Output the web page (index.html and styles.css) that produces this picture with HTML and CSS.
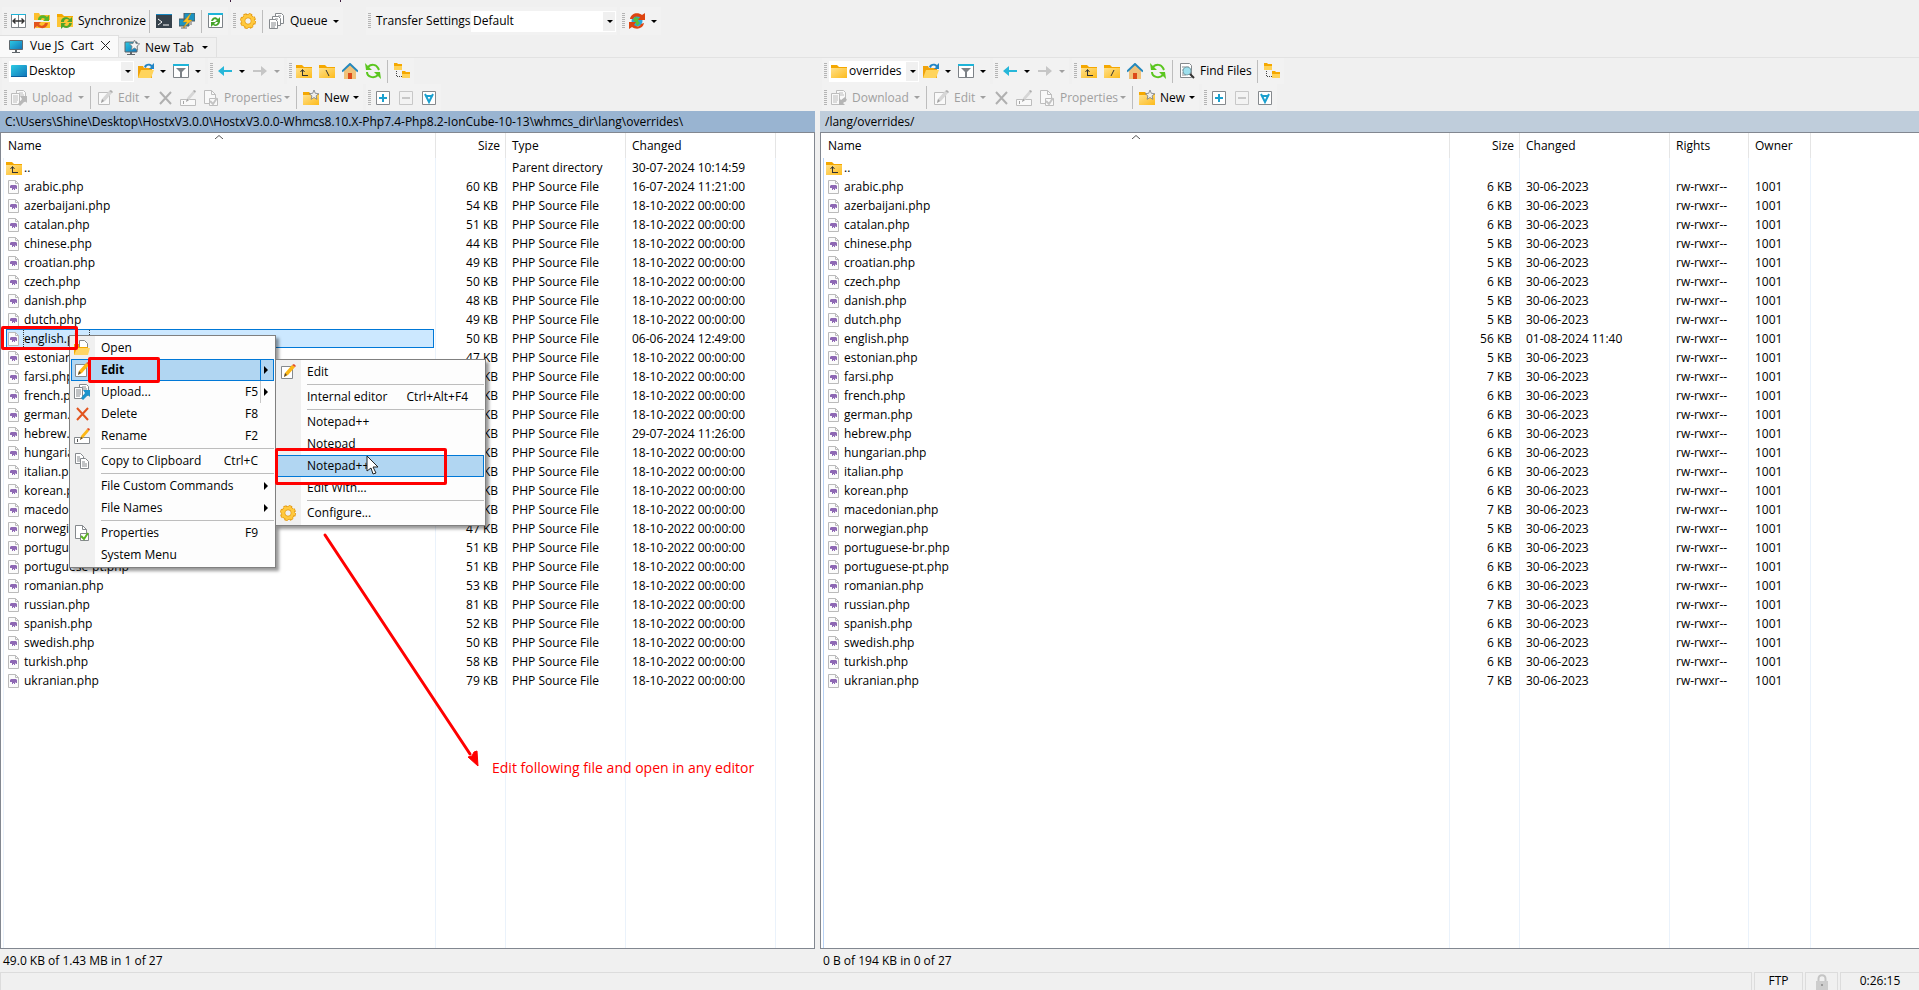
FILE: index.html
```
<!DOCTYPE html>
<html lang="en">

<head>
  <meta charset="UTF-8">
  <meta name="viewport" content="width=device-width, initial-scale=1.0">
  <title>Vue JS Cart - WinSCP</title>
  <link rel="stylesheet" href="styles.css">
</head>

<body>
  <!-- icon sprite -->
  <svg class="sprite" aria-hidden="true">
    <defs>
      <linearGradient id="gold" x1="0" y1="0" x2="1" y2="1"><stop offset="0" stop-color="#ffe08a"/><stop offset="1" stop-color="#fdbb1c"/></linearGradient>
      <linearGradient id="blue" x1="0" y1="0" x2="1" y2="1"><stop offset="0" stop-color="#2ccbe4"/><stop offset="1" stop-color="#1173b8"/></linearGradient>
    </defs>
    <symbol id="i-compare" viewBox="0 0 16 16"><path d="M.5 1.500h14v13H.5z" fill="#fff" stroke="#7d8287"/><path d="M0 1h15v1H0z" fill="#1eb4d8"/><path d="M7.500 2v12" stroke="#7d8287"/><path d="M2 8h11M4.500 5.500L2 8l2.500 2.500M10.500 5.500L13 8l-2.500 2.500" fill="none" stroke="#333" stroke-width="1.400"/></symbol>
    <symbol id="i-folder" viewBox="0 0 16 16"><path d="M0 2h6l2 2h8v3H0z" fill="#f5a800"/><path d="M0 5h16v10H0z" fill="url(#gold)"/></symbol>
    <symbol id="i-browse" viewBox="0 0 16 16"><path d="M0 0h5l1 2h10v5H0zM2 9h14v6H2z" fill="#fdbf2d"/><path d="M4 7c0-5 6-6 9-3l2-2v6H9l2-2C9 4 7 5 7 7z" fill="#59b52c"/><path d="M0 9h7l-2 2c2 3 5 2 6-1h3c-1 5-6 7-11 3l-3 3z" fill="#e2541e"/></symbol>
    <symbol id="i-sync" viewBox="0 0 16 16"><path d="M0 1h5l2 2h9v3H0z" fill="#f5a800"/><path d="M0 4h16v10H0z" fill="#fdc536"/><path d="M4 9c0-5 6-6 9-3l2-2v5h-5l2-2c-2-2-5-1-5 2zM15 10c-1 5-6 6-9 4l-2 2v-6h5l-2 2c2 2 5 1 5-2z" fill="#4da52b"/></symbol>
    <symbol id="i-terminal" viewBox="0 0 16 16"><path d="M0 1h16v14H0z" fill="#36424c"/><path d="M0 1h16v1H0z" fill="#1787c0"/><path d="M2 6l4 3-4 3M7 12h6" fill="none" stroke="#fff"/></symbol>
    <symbol id="i-putty" viewBox="0 0 16 16"><path d="M5 0h11v8H5zM0 6h10v7H0z" fill="#1b93c2" stroke="#555b60"/><path d="M2 15h6M12 9v3M5 13v2" stroke="#666"/><path d="M12 0L4 9h4l-4 6 9-8H9z" fill="#ffc21f" stroke="#d38c00" stroke-width=".4"/></symbol>
    <symbol id="i-keep" viewBox="0 0 16 16"><path d="M.5 1.500h14v13H.5z" fill="#fff" stroke="#7d8287"/><path d="M0 0h15v2H0z" fill="#1eb4d8"/><path d="M3 8c1-4 5-5 7-2l2-2v5H7l2-2c-2-1-3-1-4 1zM12 9c-1 4-5 5-7 3l-2 2V9h5l-2 2c2 1 3 0 4-2z" fill="#46a42a"/></symbol>
    <symbol id="i-gear" viewBox="0 0 16 16"><circle cx="8" cy="8" r="6.500" fill="none" stroke="#e59a12" stroke-width="3" stroke-dasharray="3.100 2"/><circle cx="8" cy="8" r="4.800" fill="none" stroke="#e59a12" stroke-width="4.200"/><circle cx="8" cy="8" r="6.300" fill="none" stroke="#ffc93e" stroke-width="1.800" stroke-dasharray="2.200 2.750"/><circle cx="8" cy="8" r="4.800" fill="none" stroke="#ffc93e" stroke-width="2.800"/></symbol>
    <symbol id="i-queue" viewBox="0 0 16 16"><g fill="#fff" stroke="#85898d"><path d="M6.500.5h6l2 2v8h-8z"/><path d="M3.500 3.500h6l2 2v7h-8z"/><path d="M.5 6.500h6l2 2v7h-8z"/></g><path d="M2 10h5M2 12h5M2 14h4M6 6h3M9 3h3" stroke="#85898d" fill="none"/></symbol>
    <symbol id="i-globe" viewBox="0 0 16 16"><circle cx="8" cy="8" r="5.500" fill="#29a8dd"/><path d="M6 4l4 1-1 3 2 2-3 3-2-4-2-2z" fill="#5ac13b"/><path d="M1 6c1-6 8-7 12-4l3-2v7H9l2-3C8 3 5 3 4 6zM15 10c-1 6-8 7-12 4l-3 2V9h7l-2 3c3 2 6 2 7-1z" fill="#dd4410"/></symbol>
    <symbol id="i-monitor" viewBox="0 0 16 16"><path d="M1.500 2.500h13v9h-13z" fill="url(#blue)" stroke="#61676c"/><path d="M7 12h2v2H7zM4 14h8v1H4z" fill="#61676c"/></symbol>
    <symbol id="i-newtab" viewBox="0 0 16 16"><path d="M1 2h12v10H1z" fill="url(#blue)" stroke="#61676c"/><path d="M6 12h2v2H6zM3 14h8v1H3z" fill="#61676c"/><path d="M10.500 0l1.500 3.500 3.700.3-2.800 2.500.8 3.700-3.200-2-3.200 2 .8-3.700L5.300 3.800 9 3.500z" fill="#f4f4f4" stroke="#777c82" stroke-width=".8"/></symbol>
    <symbol id="i-desktop" viewBox="0 0 16 16"><rect y="2" width="16" height="12" rx="1" fill="url(#blue)"/><path d="M0 13h16v1H0z" fill="#0a5e9e"/></symbol>
    <symbol id="i-open" viewBox="0 0 16 16"><path d="M0 3h5l1 2h8v10H0z" fill="#f0a30a"/><path d="M3 7h13l-3 8H0z" fill="#ffd45c"/><path d="M6 4c1-4 6-4 8-2l2-2v6h-5l2-2c-2-2-4-2-5 1z" fill="#2285c5"/></symbol>
    <symbol id="i-filter" viewBox="0 0 16 16"><path d="M.5 1.500h15v13H.5z" fill="#fff" stroke="#7d8287"/><path d="M0 1h16v2H0z" fill="#1eb4d8"/><path d="M3 5h10l-4 4v5H7V9z" fill="#7d8287"/></symbol>
    <symbol id="i-back" viewBox="0 0 16 16"><path d="M1 8l6-5v4h8v2H7v4z" fill="#27b7d9"/></symbol>
    <symbol id="i-fwd" viewBox="0 0 16 16"><path d="M15 8L9 3v4H1v2h8v4z" fill="#999"/></symbol>
    <symbol id="i-up" viewBox="0 0 16 16"><use href="#i-folder"/><path d="M6.500 13V7M4.500 9l2-2.500 2 2.500M6 12.500h6" fill="none" stroke="#333"/></symbol>
    <symbol id="i-root" viewBox="0 0 16 16"><use href="#i-folder"/><path d="M7 7l3 6" stroke="#333"/></symbol>
    <symbol id="i-rootr" viewBox="0 0 16 16"><use href="#i-folder"/><path d="M10 7l-3 6" stroke="#333"/></symbol>
    <symbol id="i-home" viewBox="0 0 16 16"><path d="M2 7l6-6 6 6v9H2z" fill="#f0c27a"/><path d="M6 10h4v6H6z" fill="#dd4a1a"/><path d="M0 8.500L8 1l8 7.500" fill="none" stroke="#2588bd" stroke-width="2"/></symbol>
    <symbol id="i-refresh" viewBox="0 0 16 16"><path d="M3 4c3-3 8-3 10 1l1 2M2 9c0 5 7 7 11 3" fill="none" stroke="#5bc61f" stroke-width="2"/><path d="M0 0l1 7h6zM16 16l-1-7H9z" fill="#5bc61f"/></symbol>
    <symbol id="i-tree" viewBox="0 0 16 16"><path d="M0 0h3l1 1h4v6H0zM8 8h3l1 1h4v6H8z" fill="#f5a800"/><path d="M0 3h8v4H0zM8 11h8v4H8z" fill="#ffd257"/><path d="M2.500 8v5M3 13.500h5" stroke="#444" stroke-dasharray="1 1"/></symbol>
    <symbol id="i-transfer" viewBox="0 0 16 16"><g fill="#fff" stroke="#85898d"><path d="M5.500.5h7l2 2v9h-9z"/><path d="M.5 3.500h8v11h-8z"/></g><path d="M2 6h5M2 8h5M2 10h5M2 12h4M8 3h4M9 5h4" stroke="#85898d"/><path d="M9 6h7v7l-2-2-5 5-2-2 4-5z" fill="#1d94cc"/></symbol>
    <symbol id="i-download" viewBox="0 0 16 16"><g fill="#fff" stroke="#85898d"><path d="M5.500.5h7l2 2v9h-9z"/><path d="M.5 3.500h8v11h-8z"/></g><path d="M2 6h5M2 8h5M2 10h5M2 12h4M8 3h4M9 5h4" stroke="#85898d"/><path d="M8 15V8l2 2 4-3 2 3-4 3 2 2z" fill="#777"/></symbol>
    <symbol id="i-edit" viewBox="0 0 16 16"><path d="M1.500 2.500h11v12h-11z" fill="#fff" stroke="#85898d"/><path d="M4 13l1-4 7-8 3 2-7 8z" fill="#fcb714"/><path d="M4 13l1-4 2 2z" fill="#59493a"/><path d="M12 1l2-1 2 2-1 1z" fill="#e34b22"/></symbol>
    <symbol id="i-delete" viewBox="0 0 16 16"><path d="M3 2l11 12M14 2L3 14" stroke="#e2541e" stroke-width="2"/></symbol>
    <symbol id="i-rename" viewBox="0 0 16 16"><path d="M.5 9.500h15v6H.5z" fill="#fff" stroke="#85898d"/><path d="M3.500 11v3" stroke="#555"/><path d="M6 12l1-4 6-7 2 2-6 7z" fill="#fcb714"/><path d="M6 12l1-3 2 1z" fill="#59493a"/><path d="M13 1l1-1 2 1-1 2z" fill="#e34b22"/></symbol>
    <symbol id="i-props" viewBox="0 0 16 16"><path d="M1.500.500h7l4 4v9h-11z" fill="#fff" stroke="#85898d"/><path d="M8.500.5v4h4" fill="none" stroke="#85898d"/><path d="M6.500 8.500h8v7h-8z" fill="#fff" stroke="#85898d"/><path d="M7 11l3 3 4-6" fill="none" stroke="#5bb324" stroke-width="2"/></symbol>
    <symbol id="i-new" viewBox="0 0 16 16"><use href="#i-folder"/><path d="M11 0l1.300 3.300 3.400.4-2.600 2.200.8 3.400L11 7.500 8.100 9.300l.8-3.400-2.600-2.200 3.400-.4z" fill="#eee" stroke="#777c82" stroke-width=".8"/></symbol>
    <symbol id="i-plus" viewBox="0 0 16 16"><path d="M1.500 1.500h13v13h-13z" fill="#fff" stroke="#85898d"/><path d="M4 8h8M8 4v8" stroke="#1aa0cf" stroke-width="2"/></symbol>
    <symbol id="i-minus" viewBox="0 0 16 16"><path d="M1.500 1.500h13v13h-13z" fill="#f3f3f3" stroke="#c8c8c8"/><path d="M4 8h8" stroke="#c8c8c8" stroke-width="2"/></symbol>
    <symbol id="i-select" viewBox="0 0 16 16"><path d="M1.500 1.500h13v13h-13z" fill="#fff" stroke="#85898d"/><path d="M4 4l4 8 4-8M5 6h6" fill="none" stroke="#1aa0cf" stroke-width="2"/></symbol>
    <symbol id="i-find" viewBox="0 0 16 16"><path d="M1.500.5h9l2 2v12h-11z" fill="#fff" stroke="#85898d"/><path d="M3 4h7M3 7h3M3 10h2M3 12h4" stroke="#85898d"/><circle cx="8" cy="8" r="4" fill="#9de0ee" stroke="#7aa5ae"/><path d="M11 11l4 4" stroke="#333" stroke-width="2"/></symbol>
    <symbol id="i-openfile" viewBox="0 0 16 16"><path d="M5.500.5h5l3 3v7h-8z" fill="#fff" stroke="#85898d"/><path d="M0 4h5v3h9v8H0z" fill="#f5a800"/><path d="M3 8h13l-2 7H0z" fill="#ffd566"/></symbol>
    <symbol id="i-copy" viewBox="0 0 16 16"><g fill="#fff" stroke="#85898d"><path d="M1.500.5h5l3 3v7h-8z"/><path d="M6.500 5.500h5l3 3v7h-8z"/></g><path d="M3 4h3M3 6h3M3 8h3M8 9h3M8 11h5M8 13h5" stroke="#85898d"/></symbol>
    <symbol id="i-php" viewBox="0 0 12 14"><path d="M.5.500h7l3 3v10H.5z" fill="#fbfbfb" stroke="#bbb"/><path d="M7.500.5v3h3" fill="none" stroke="#bbb"/><path d="M3 5h5l1 1v3H8L7 8v2H6V9H5v1H4V8H2V6z" fill="#8e68b4"/></symbol>
    <symbol id="i-lock" viewBox="0 0 16 16"><path d="M4.500 9V5c0-5 7-5 7 0v4" fill="none" stroke="#c4c4c4" stroke-width="2"/><path d="M2 7h12v9H2z" fill="#cdcdcd"/><circle cx="8" cy="11" r="1" fill="#888"/></symbol>
    <symbol id="i-sort" viewBox="0 0 8 4"><path d="M0 4l4-3.500L8 4" fill="none" stroke="#555"/></symbol>
  </svg>

  <div class="app">
    <div class="menu-edge"><i></i><i></i></div>

    <div class="bar bar-top">
      <div class="group">
        <button class="tool" aria-label="Compare directories"><svg><use href="#i-compare"/></svg></button>
        <button class="tool" aria-label="Synchronize browsing"><svg><use href="#i-browse"/></svg></button>
        <button class="tool w-sync"><svg><use href="#i-sync"/></svg>Synchronize</button>
        <span class="sep"></span>
        <button class="tool" aria-label="Terminal"><svg><use href="#i-terminal"/></svg></button>
        <button class="tool" aria-label="PuTTY"><svg><use href="#i-putty"/></svg></button>
        <span class="sep"></span>
        <button class="tool" aria-label="Keep up to date"><svg><use href="#i-keep"/></svg></button>
      </div>
      <div class="group">
        <button class="tool" aria-label="Preferences"><svg><use href="#i-gear"/></svg></button>
        <span class="sep"></span>
        <button class="tool w-queue"><svg><use href="#i-queue"/></svg>Queue</button>
        <button class="caret" aria-label="Queue options"></button>
      </div>
      <div class="group group-transfer">
        <label class="tool-label" for="transfer">Transfer Settings</label>
        <div class="combo combo-transfer"><select id="transfer"><option>Default</option></select></div>
      </div>
      <div class="group">
        <button class="tool" aria-label="Reconnect"><svg><use href="#i-globe"/></svg></button>
        <button class="caret" aria-label="Reconnect options"></button>
      </div>
    </div>

    <div class="tabs">
      <button class="tab active"><svg><use href="#i-monitor"/></svg><span>Vue JS&nbsp; Cart</span><b class="close"></b></button>
      <button class="tab"><svg><use href="#i-newtab"/></svg><span>New Tab</span><b class="arrow"></b></button>
    </div>

    <main class="panes">
      <section class="pane local">
        <div class="bar">
          <div class="group">
            <div class="combo combo-local"><svg><use href="#i-desktop"/></svg><select aria-label="Local drive"><option>Desktop</option></select></div>
            <button class="tool" aria-label="Open directory"><svg><use href="#i-open"/></svg></button>
            <button class="caret" aria-label="Recent"></button>
            <button class="tool" aria-label="Filter"><svg><use href="#i-filter"/></svg></button>
            <button class="caret" aria-label="Filter options"></button>
          </div>
          <div class="group">
            <button class="tool" aria-label="Back"><svg><use href="#i-back"/></svg></button>
            <button class="caret" aria-label="Back history"></button>
            <button class="tool" aria-label="Forward" disabled><svg><use href="#i-fwd"/></svg></button>
            <button class="caret" aria-label="Forward history" disabled></button>
          </div>
          <div class="group">
            <button class="tool" aria-label="Parent directory"><svg><use href="#i-up"/></svg></button>
            <button class="tool" aria-label="Root directory"><svg><use href="#i-root"/></svg></button>
            <button class="tool" aria-label="Home directory"><svg><use href="#i-home"/></svg></button>
            <button class="tool" aria-label="Refresh"><svg><use href="#i-refresh"/></svg></button>
            <span class="sep"></span>
            <button class="tool" aria-label="Tree"><svg><use href="#i-tree"/></svg></button>
          </div>
        </div>
        <div class="bar">
          <div class="group">
            <button class="tool w-upload" disabled><svg><use href="#i-transfer"/></svg>Upload</button>
            <button class="caret" aria-label="Upload options" disabled></button>
            <span class="sep"></span>
            <button class="tool w-edit" disabled><svg><use href="#i-edit"/></svg>Edit</button>
            <button class="caret" aria-label="Edit options" disabled></button>
            <button class="tool" aria-label="Delete" disabled><svg><use href="#i-delete"/></svg></button>
            <button class="tool" aria-label="Rename" disabled><svg><use href="#i-rename"/></svg></button>
            <button class="tool w-props" disabled><svg><use href="#i-props"/></svg>Properties</button>
            <button class="caret" aria-label="Properties options" disabled></button>
            <span class="sep"></span>
            <button class="tool w-new"><svg><use href="#i-new"/></svg>New</button>
            <button class="caret" aria-label="New options"></button>
          </div>
          <div class="group">
            <button class="tool" aria-label="Select files"><svg><use href="#i-plus"/></svg></button>
            <button class="tool" aria-label="Unselect files"><svg><use href="#i-minus"/></svg></button>
            <button class="tool" aria-label="Select all"><svg><use href="#i-select"/></svg></button>
          </div>
        </div>
        <div class="path">C:\Users\Shine\Desktop\HostxV3.0.0\HostxV3.0.0-Whmcs8.10.X-Php7.4-Php8.2-IonCube-10-13\whmcs_dir\lang\overrides\</div>
        <div class="list">
          <table>
            <colgroup><col class="c-name"><col class="c-size"><col class="c-type"><col class="c-changed"><col></colgroup>
            <thead>
              <tr><th>Name<svg class="sort"><use href="#i-sort"/></svg></th><th class="num">Size</th><th>Type</th><th>Changed</th><th></th></tr>
            </thead>
            <tbody id="local-files"></tbody>
          </table>
        </div>
        <div class="summary">49.0 KB of 1.43 MB in 1 of 27</div>
      </section>

      <section class="pane remote">
        <div class="bar">
          <div class="group">
            <div class="combo combo-remote"><svg><use href="#i-folder"/></svg><select aria-label="Remote directory"><option>overrides</option></select></div>
            <button class="tool" aria-label="Open directory"><svg><use href="#i-open"/></svg></button>
            <button class="caret" aria-label="Recent"></button>
            <button class="tool" aria-label="Filter"><svg><use href="#i-filter"/></svg></button>
            <button class="caret" aria-label="Filter options"></button>
          </div>
          <div class="group">
            <button class="tool" aria-label="Back"><svg><use href="#i-back"/></svg></button>
            <button class="caret" aria-label="Back history"></button>
            <button class="tool" aria-label="Forward" disabled><svg><use href="#i-fwd"/></svg></button>
            <button class="caret" aria-label="Forward history" disabled></button>
          </div>
          <div class="group">
            <button class="tool" aria-label="Parent directory"><svg><use href="#i-up"/></svg></button>
            <button class="tool" aria-label="Root directory"><svg><use href="#i-rootr"/></svg></button>
            <button class="tool" aria-label="Home directory"><svg><use href="#i-home"/></svg></button>
            <button class="tool" aria-label="Refresh"><svg><use href="#i-refresh"/></svg></button>
            <span class="sep"></span>
            <button class="tool w-find"><svg><use href="#i-find"/></svg>Find Files</button>
            <span class="sep"></span>
            <button class="tool" aria-label="Tree"><svg><use href="#i-tree"/></svg></button>
          </div>
        </div>
        <div class="bar">
          <div class="group">
            <button class="tool w-download" disabled><svg><use href="#i-download"/></svg>Download</button>
            <button class="caret" aria-label="Download options" disabled></button>
            <span class="sep"></span>
            <button class="tool w-edit" disabled><svg><use href="#i-edit"/></svg>Edit</button>
            <button class="caret" aria-label="Edit options" disabled></button>
            <button class="tool" aria-label="Delete" disabled><svg><use href="#i-delete"/></svg></button>
            <button class="tool" aria-label="Rename" disabled><svg><use href="#i-rename"/></svg></button>
            <button class="tool w-props" disabled><svg><use href="#i-props"/></svg>Properties</button>
            <button class="caret" aria-label="Properties options" disabled></button>
            <span class="sep"></span>
            <button class="tool w-new"><svg><use href="#i-new"/></svg>New</button>
            <button class="caret" aria-label="New options"></button>
          </div>
          <div class="group">
            <button class="tool" aria-label="Select files"><svg><use href="#i-plus"/></svg></button>
            <button class="tool" aria-label="Unselect files"><svg><use href="#i-minus"/></svg></button>
            <button class="tool" aria-label="Select all"><svg><use href="#i-select"/></svg></button>
          </div>
        </div>
        <div class="path">/lang/overrides/</div>
        <div class="list">
          <table>
            <colgroup><col class="c-name"><col class="c-size"><col class="c-changed"><col class="c-rights"><col class="c-owner"><col></colgroup>
            <thead>
              <tr><th>Name<svg class="sort"><use href="#i-sort"/></svg></th><th class="num">Size</th><th>Changed</th><th>Rights</th><th>Owner</th><th></th></tr>
            </thead>
            <tbody id="remote-files"></tbody>
          </table>
        </div>
        <div class="summary">0 B of 194 KB in 0 of 27</div>
      </section>
    </main>

    <footer class="status">
      <span class="cell grow"></span>
      <span class="cell cell-proto">FTP</span>
      <span class="cell cell-lock"><svg><use href="#i-lock"/></svg></span>
      <span class="cell cell-time">0:26:15</span>
    </footer>
  </div>

  <!-- file context menu -->
  <div class="menu menu-file">
    <button><svg><use href="#i-openfile"/></svg><span>Open</span></button>
    <button class="hot split"><svg><use href="#i-edit"/></svg><strong>Edit</strong><i></i></button>
    <button class="split"><svg><use href="#i-transfer"/></svg><span>Upload...</span><kbd>F5</kbd><i></i></button>
    <button><svg><use href="#i-delete"/></svg><span>Delete</span><kbd>F8</kbd></button>
    <button><svg><use href="#i-rename"/></svg><span>Rename</span><kbd>F2</kbd></button>
    <hr>
    <button><svg><use href="#i-copy"/></svg><span>Copy to Clipboard</span><kbd>Ctrl+C</kbd></button>
    <hr>
    <button><span>File Custom Commands</span><i></i></button>
    <button><span>File Names</span><i></i></button>
    <hr>
    <button><svg><use href="#i-props"/></svg><span>Properties</span><kbd>F9</kbd></button>
    <button><span>System Menu</span></button>
  </div>

  <div class="menu menu-edit">
    <button><svg><use href="#i-edit"/></svg><span>Edit</span></button>
    <hr>
    <button><span>Internal editor</span><kbd>Ctrl+Alt+F4</kbd></button>
    <hr>
    <button><span>Notepad++</span></button>
    <button><span>Notepad</span></button>
    <button class="hot"><span>Notepad++</span></button>
    <button><span>Edit With...</span></button>
    <hr>
    <button><svg><use href="#i-gear"/></svg><span>Configure...</span></button>
  </div>

  <!-- callouts -->
  <div class="mark mark-file"></div>
  <div class="mark mark-edit"></div>
  <div class="mark mark-notepad"></div>
  <svg class="pointer" viewBox="0 0 14 20"><path d="M1 1v15l4-3 2 6 3-1-3-6h5z" fill="#fff" stroke="#222"/></svg>
  <svg class="long-arrow" viewBox="0 0 160 240"><path d="M4 4l145 219" stroke="#f00" stroke-width="3" stroke-linecap="round"/><path d="M157 235l-10-9 4-1 2-4 3-1z" fill="#f00" stroke="#f00" stroke-width="1"/></svg>
  <p class="note">Edit following file and open in any editor</p>

  <script src="script.js"></script>
</body>

</html>
```
FILE: styles.css
```
:root {
  --face: #f0f0f0;
  --line: #e5e5e5;
  --grid: #eaf2fb;
  --hot: #b1d6f2;
  --accent: #0078d7;
}

* {
  margin: 0;
  padding: 0;
  box-sizing: border-box;
}

body {
  height: 100vh;
  overflow: hidden;
  position: relative;
  background: var(--face);
  color: #000;
  font: 12px/16px "Open Sans", "Noto Sans", sans-serif;
}

button,
select {
  font: inherit;
  color: inherit;
  border: 0;
  background: none;
}

svg {
  display: block;
  width: 16px;
  height: 16px;
  flex: none;
}

.sprite {
  position: absolute;
  width: 0;
  height: 0;
}

.app {
  height: 100%;
  display: flex;
  flex-direction: column;
}

.menu-edge {
  height: 7px;
  display: flex;
  gap: 109px;
  padding-left: 230px;
}

.menu-edge i {
  width: 1px;
  height: 2px;
  background: #402040;
}

/* toolbars */
.bar {
  display: flex;
  height: 26px;
  padding-left: 2px;
  gap: 3px;
}

.bar-top {
  height: 28px;
}

.group {
  display: flex;
  align-items: center;
  background: #f2f2f2;
  padding: 0 1px 0 2px;
}

.group::before {
  content: "";
  width: 3px;
  height: 16px;
  background: repeating-linear-gradient(#b4b4b4 0 1px, transparent 1px 2px);
}

.group-transfer {
  margin-left: 20px;
}

.tool {
  display: flex;
  align-items: center;
  gap: 5px;
  min-width: 23px;
  height: 22px;
  padding-left: 4px;
  white-space: nowrap;
}

.w-sync { width: 93px; }
.w-queue { width: 65px; }
.w-upload { width: 68px; }
.w-download { width: 84px; }
.w-edit { width: 48px; }
.w-props { width: 82px; }
.w-new { width: 51px; }
.w-find { width: 79px; }

.tool:disabled {
  color: #a0a0a0;
}

.tool:disabled svg {
  filter: grayscale(1) opacity(.5);
}

.caret {
  width: 12px;
  height: 22px;
  padding-left: 3px;
}

.caret::before,
.combo::after,
.arrow {
  content: "";
  display: block;
  width: 0;
  height: 0;
  border: 3px solid transparent;
  border-top-color: #000;
  border-bottom: 0;
}

.caret:disabled::before {
  border-top-color: #a0a0a0;
}

.sep {
  width: 1px;
  height: 23px;
  margin: 0 2px 0 3px;
  background: #bdbdbd;
}

.tool-label {
  width: 100px;
  padding-left: 5px;
  white-space: nowrap;
}

.combo {
  display: flex;
  align-items: center;
  height: 21px;
  background: linear-gradient(90deg, #fff calc(100% - 12px), #f0f0f0 0);
  border: 1px solid #fff;
  padding: 0 2px 0 1px;
}

.combo select {
  flex: 1;
  min-width: 0;
  appearance: none;
  padding-left: 2px;
}

.combo-transfer { width: 145px; }
.combo-transfer select { padding-left: 0; }
.combo-local { width: 125px; margin-left: 2px; }
.combo-remote { width: 90px; margin-left: 2px; }

/* session tabs */
.tabs {
  display: flex;
  align-items: flex-end;
  height: 23px;
  border-bottom: 1px solid #e2e2e2;
}

.tab {
  display: flex;
  align-items: center;
  height: 20px;
  padding: 0 8px 0 5px;
  gap: 5px;
  border: 1px solid #e0e0e0;
  border-width: 1px 1px 0 0;
}

.tab.active {
  height: 22px;
  width: 119px;
  padding: 0 8px 2px;
  gap: 6px;
  background: #fafafa;
}

.close {
  width: 9px;
  height: 9px;
  margin-left: auto;
  background:
    linear-gradient(45deg, transparent 45%, #222 45% 55%, transparent 55%),
    linear-gradient(-45deg, transparent 45%, #222 45% 55%, transparent 55%);
}

.arrow {
  margin-left: 3px;
}

/* panes */
.panes {
  flex: 1;
  min-height: 0;
  display: grid;
  grid-template-columns: 815fr 1099fr;
  gap: 5px;
}

.pane {
  display: flex;
  flex-direction: column;
  min-width: 0;
}

.pane .bar + .bar {
  height: 27px;
}

.path {
  height: 21px;
  padding: 3px 5px 2px;
  background: #99b4d1;
  white-space: nowrap;
}

.remote .path {
  background: #bfcddb;
}

.list {
  flex: 1;
  min-height: 0;
  background: #fff;
  border: 1px solid #828790;
  padding-left: 2px;
}

.remote .list {
  border-right: 0;
}

table {
  width: 100%;
  height: 100%;
  table-layout: fixed;
  border-collapse: separate;
  border-spacing: 0;
}

.c-name { width: 433px; }
.c-size { width: 70px; }
.c-type { width: 120px; }
.c-changed { width: 150px; }
.c-rights { width: 79px; }
.c-owner { width: 62px; }
.remote .c-name { width: 627px; }

th {
  position: relative;
  height: 25px;
  padding: 0 6px;
  font-weight: normal;
  text-align: left;
  border-right: 1px solid var(--line);
}

th:first-child {
  padding-left: 5px;
}

.sort {
  position: absolute;
  top: 2px;
  left: 50%;
  width: 8px;
  height: 4px;
  margin-left: -4px;
}

td {
  height: 19px;
  padding: 0 6px;
  line-height: 18px;
  white-space: nowrap;
  overflow: hidden;
  border-right: 1px solid var(--grid);
}

th:last-child,
td:last-child {
  border-right: 0;
}

.num {
  text-align: right;
}

th.num {
  padding-right: 5px;
}

td.num {
  padding-right: 7px;
}

td:first-child {
  padding: 0 1px 0 2px;
  border-left: 1px solid var(--grid);
}

.remote td:first-child {
  border-left-color: #b9d3f5;
}

.name {
  display: flex;
  align-items: center;
  height: 19px;
  gap: 4px;
  padding-left: 2px;
}

.name svg {
  width: 12px;
  height: 14px;
}

.name.parent {
  padding-left: 0;
  gap: 2px;
}

.name.parent svg {
  width: 16px;
  height: 16px;
}

.name.selected {
  background: #cce8ff;
  outline: 1px solid var(--accent);
  outline-offset: -1px;
}

.name.selected span {
  outline: 1px dotted #333;
}

.filler td {
  height: auto;
}

.summary {
  height: 23px;
  padding: 4px 3px;
}

/* status bar */
.status {
  display: flex;
  gap: 2px;
  height: 18px;
}

.cell {
  display: flex;
  justify-content: center;
  border: 1px solid #dcdcdc;
  border-bottom: 0;
}

.grow { flex: 1; }
.cell-proto { width: 49px; }
.cell-lock { width: 33px; }
.cell-time { width: 79px; border-right: 0; }

.cell-lock svg {
  margin-top: 1px;
}

/* popup menus */
.menu {
  position: absolute;
  padding: 1px;
  border: 1px solid #808080;
  background: linear-gradient(90deg, #f0f0f0 25px, #fdfdfd 25px);
  box-shadow: 3px 3px 3px rgba(0, 0, 0, .4);
}

.menu-file {
  left: 69px;
  top: 335px;
  width: 207px;
}

.menu-edit {
  left: 275px;
  top: 359px;
  width: 211px;
}

.menu button {
  position: relative;
  display: grid;
  grid-template-columns: 27px 1fr auto 16px;
  align-items: center;
  width: 100%;
  height: 22px;
  padding-left: 3px;
  text-align: left;
}

.menu button > span,
.menu button > strong {
  grid-column: 2;
}

.menu kbd {
  grid-column: 3;
  font: inherit;
}

.menu i {
  grid-column: 4;
  width: 0;
  height: 0;
  margin-left: 6px;
  border: 4px solid transparent;
  border-left-color: #000;
  border-right: 0;
}

.menu .hot {
  background: var(--hot);
  outline: 1px solid var(--accent);
  outline-offset: -1px;
}

.split::after {
  content: "";
  position: absolute;
  top: 0;
  right: 13px;
  width: 1px;
  height: 22px;
  background: #c8c8c8;
}

.hot.split::after {
  background: var(--accent);
}

.menu hr {
  height: 1px;
  margin: 1px 0 1px 30px;
  border: 0;
  background: #bdbdbd;
}

/* callouts */
.mark {
  position: absolute;
  border: 3px solid #f00;
  border-radius: 2px;
}

.mark-file {
  left: 1px;
  top: 326px;
  width: 77px;
  height: 24px;
}

.mark-edit {
  left: 88px;
  top: 357px;
  width: 72px;
  height: 26px;
}

.mark-notepad {
  left: 275px;
  top: 448px;
  width: 172px;
  height: 37px;
}

.pointer {
  position: absolute;
  left: 366px;
  top: 455px;
  width: 14px;
  height: 20px;
}

.long-arrow {
  position: absolute;
  left: 321px;
  top: 531px;
  width: 160px;
  height: 240px;
}

.note {
  position: absolute;
  left: 492px;
  top: 760px;
  color: #f00;
  font-size: 14px;
  white-space: nowrap;
}
```
FILE: script.js
```
// name, local size, remote size
const files = [
  ['arabic', 60, 6], ['azerbaijani', 54, 6], ['catalan', 51, 6], ['chinese', 44, 5],
  ['croatian', 49, 5], ['czech', 50, 6], ['danish', 48, 5], ['dutch', 49, 5],
  ['english', 50, 56], ['estonian', 47, 5], ['farsi', 60, 7], ['french', 52, 6],
  ['german', 51, 6], ['hebrew', 56, 6], ['hungarian', 52, 6], ['italian', 50, 6],
  ['korean', 50, 6], ['macedonian', 74, 7], ['norwegian', 47, 5], ['portuguese-br', 51, 6],
  ['portuguese-pt', 51, 6], ['romanian', 53, 6], ['russian', 81, 7], ['spanish', 52, 6],
  ['swedish', 50, 6], ['turkish', 58, 6], ['ukranian', 79, 7]
];

const localDates = {
  arabic: '16-07-2024 11:21:00',
  english: '06-06-2024 12:49:00',
  hebrew: '29-07-2024 11:26:00'
};

const nameCell = (text, icon, cls = '') =>
  `<td><div class="name ${cls}"><svg><use href="#${icon}"/></svg><span>${text}</span></div></td>`;

let local = `<tr>${nameCell('..', 'i-up', 'parent')}<td></td><td>Parent directory</td><td>30-07-2024 10:14:59</td><td></td></tr>`;
let remote = `<tr>${nameCell('..', 'i-up', 'parent')}<td></td><td></td><td></td><td></td><td></td></tr>`;

for (const [name, size, remoteSize] of files) {
  const selected = name === 'english' ? 'selected' : '';
  local += `<tr>${nameCell(name + '.php', 'i-php', selected)}<td class="num">${size} KB</td>
    <td>PHP Source File</td><td>${localDates[name] || '18-10-2022 00:00:00'}</td><td></td></tr>`;
  remote += `<tr>${nameCell(name + '.php', 'i-php')}<td class="num">${remoteSize} KB</td>
    <td>${name === 'english' ? '01-08-2024 11:40' : '30-06-2023'}</td><td>rw-rwxr--</td><td>1001</td><td></td></tr>`;
}

// last row keeps the column lines running to the bottom
local += '<tr class="filler">' + '<td></td>'.repeat(5) + '</tr>';
remote += '<tr class="filler">' + '<td></td>'.repeat(6) + '</tr>';

document.getElementById('local-files').innerHTML = local;
document.getElementById('remote-files').innerHTML = remote;
```
